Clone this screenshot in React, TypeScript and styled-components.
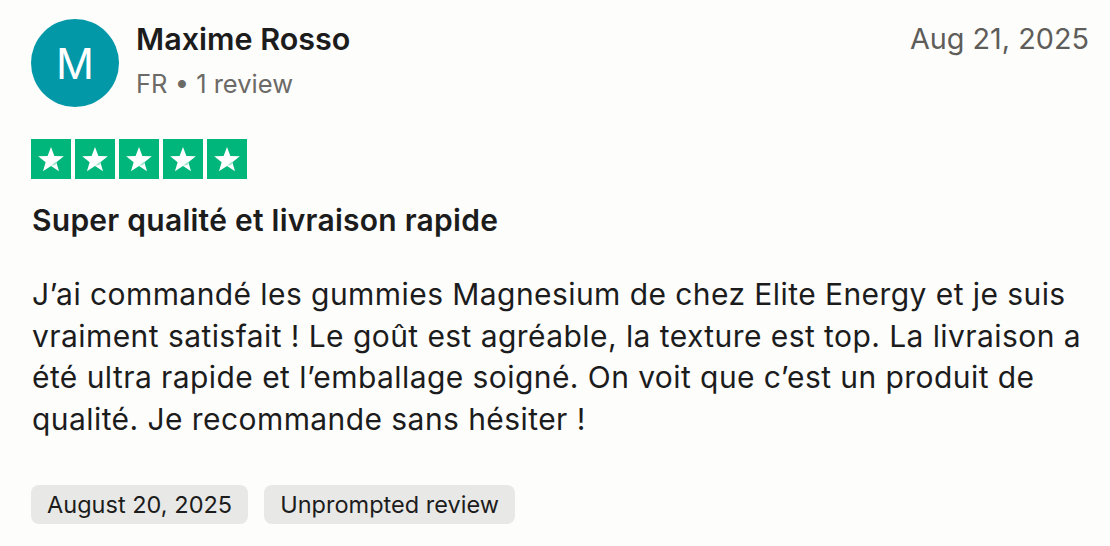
import React from "react";
import styled, { createGlobalStyle } from "styled-components";

const Global = createGlobalStyle`
  html, body { margin: 0; padding: 0; background: #fdfdfc; }
  body { font-family: Inter, "Noto Sans", sans-serif; color: #1c1c1c; }
`;

const Card = styled.article`
  width: 1110px;
  height: 546px;
  box-sizing: border-box;
  padding: 19px 21px 0 31px;
  display: flex;
  flex-direction: column;
`;

const Header = styled.header`
  display: flex;
  align-items: flex-start;
  gap: 17px;
`;

const Avatar = styled.div`
  width: 88px;
  height: 88px;
  border-radius: 50%;
  background: #0398a8;
  color: #fff;
  display: flex;
  align-items: center;
  justify-content: center;
  font-size: 42px;
  font-weight: 400;
  flex-shrink: 0;
`;

const Info = styled.div`
  flex: 1;
  display: flex;
  flex-direction: column;
  padding-top: 2px;
`;

const Name = styled.div`
  font-size: 30.5px;
  font-weight: 600;
  line-height: 36px;
  color: #1c1c1c;
`;

const Meta = styled.div`
  margin-top: 12px;
  font-size: 25.5px;
  line-height: 30px;
  color: #6c6a67;
`;

const DateText = styled.time`
  font-size: 28.8px;
  line-height: 36px;
  color: #5f5d5a;
  padding-top: 2px;
`;

const Stars = styled.div`
  display: flex;
  gap: 4px;
  margin-top: 32px;
`;

const StarBox = styled.div`
  width: 40px;
  height: 40px;
  background: #00b67a;
  display: flex;
  align-items: center;
  justify-content: center;
`;

const Title = styled.h2`
  margin: 23px 0 0 1px;
  font-size: 30px;
  font-weight: 600;
  line-height: 36px;
  letter-spacing: 0.25px;
  color: #1c1c1c;
`;

const Body = styled.p`
  margin: 36px 0 0 1px;
  font-size: 30px;
  line-height: 41.5px;
  letter-spacing: 0.43px;
  color: #1c1c1c;
`;

const Tags = styled.div`
  display: flex;
  gap: 16px;
  margin-top: 45px;
`;

const Tag = styled.span`
  height: 39px;
  box-sizing: border-box;
  padding: 0 16px;
  display: flex;
  align-items: center;
  background: #e8e8e6;
  border-radius: 8px;
  font-size: 23.5px;
  letter-spacing: 0.02px;
  color: #1c1c1c;
`;

const Star = () => (
  <svg width="28" height="28" viewBox="0 0 24 24">
    <path
      d="M12 1.8l2.9 7.6 8.1.3-6.4 5 2.3 7.8L12 17.9l-6.9 4.6 2.3-7.8-6.4-5 8.1-.3z"
      fill="#fff"
    />
    <path d="M15.9 14.2l.7 2.5L12 17.9z" fill="#00b67a" opacity="0.35" />
  </svg>
);

export default function App() {
  return (
    <>
      <Global />
      <Card>
        <Header>
          <Avatar>M</Avatar>
          <Info>
            <Name>Maxime Rosso</Name>
            <Meta>FR • 1 review</Meta>
          </Info>
          <DateText>Aug 21, 2025</DateText>
        </Header>
        <Stars>
          {[0, 1, 2, 3, 4].map((i) => (
            <StarBox key={i}>
              <Star />
            </StarBox>
          ))}
        </Stars>
        <Title>Super qualité et livraison rapide</Title>
        <Body>
          J’ai commandé les gummies Magnesium de chez Elite Energy et je suis
          vraiment satisfait ! Le goût est agréable, la texture est top. La
          livraison a été ultra rapide et l’emballage soigné. On voit que c’est
          un produit de qualité. Je recommande sans hésiter !
        </Body>
        <Tags>
          <Tag>August 20, 2025</Tag>
          <Tag>Unprompted review</Tag>
        </Tags>
      </Card>
    </>
  );
}
